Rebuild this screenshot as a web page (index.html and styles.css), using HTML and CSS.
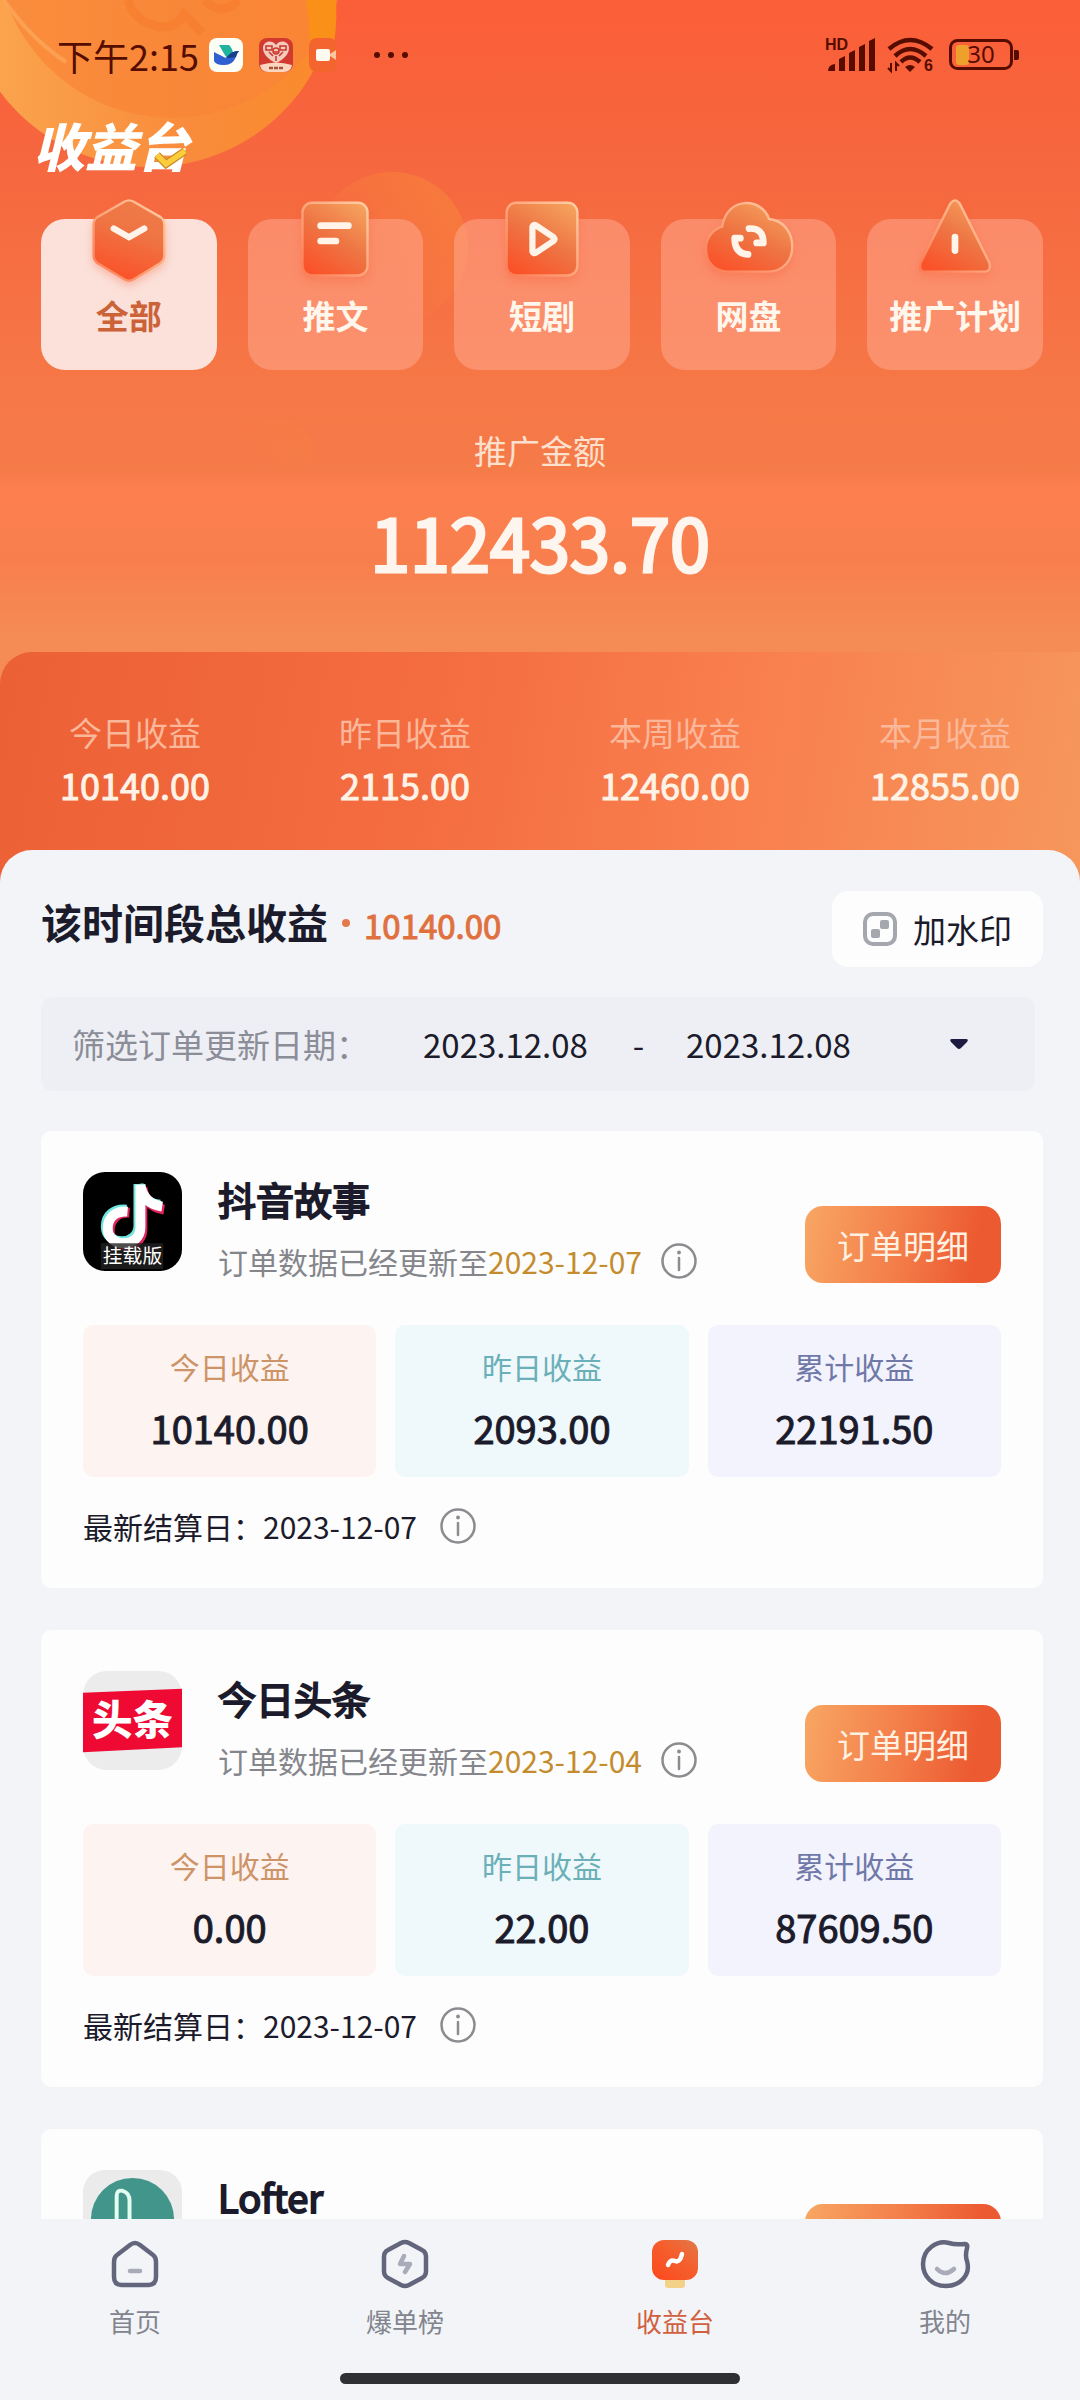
FILE: index.html
```html
<!DOCTYPE html>
<html lang="zh-CN">
<head>
    <meta charset="UTF-8">
    <meta name="viewport" content="width=device-width, initial-scale=1.0">
    <title>收益台</title>
    <link rel="stylesheet" href="styles.css">
</head>
<body>

    <!-- Shared gradients and symbols -->
    <svg class="defs" aria-hidden="true">
        <defs>
            <linearGradient id="tile" x1="0.2" y1="1" x2="0.8" y2="0">
                <stop offset="0" stop-color="#fb5128"/>
                <stop offset="0.5" stop-color="#ee7443"/>
                <stop offset="1" stop-color="#f5a05c"/>
            </linearGradient>
            <linearGradient id="hex" x1="0.4" y1="1" x2="0.7" y2="0">
                <stop offset="0" stop-color="#fb5128"/>
                <stop offset="0.6" stop-color="#ef7444"/>
                <stop offset="1" stop-color="#ee7c48"/>
            </linearGradient>
            <linearGradient id="screen" x1="0" y1="1" x2="1" y2="0">
                <stop offset="0" stop-color="#fd481c"/>
                <stop offset="0.6" stop-color="#f4602f"/>
                <stop offset="1" stop-color="#e07a48"/>
            </linearGradient>
            <linearGradient id="edge" x1="0" y1="1" x2="1" y2="0">
                <stop offset="0" stop-color="#fb7c54"/>
                <stop offset="1" stop-color="#ffcfa6"/>
            </linearGradient>
            <linearGradient id="coin" x1="0" y1="0" x2="1" y2="0">
                <stop offset="0" stop-color="#fba850"/>
                <stop offset="0.6" stop-color="#f98c3c"/>
                <stop offset="1" stop-color="#fa8a2a"/>
            </linearGradient>
            <linearGradient id="small-coin" x1="0" y1="1" x2="1" y2="0">
                <stop offset="0.3" stop-color="#f98a3c" stop-opacity="0"/>
                <stop offset="1" stop-color="#f98a38" stop-opacity="0.6"/>
            </linearGradient>
        </defs>
        <symbol id="info" viewBox="0 0 38 38">
            <circle cx="19" cy="19" r="16.5" fill="none" stroke="currentColor" stroke-width="2.5"/>
            <circle cx="19" cy="10.5" r="1.9" fill="currentColor"/>
            <path d="M19 16v12" stroke="currentColor" stroke-width="2.5" stroke-linecap="round"/>
        </symbol>
    </svg>

    <div class="app">
        <header class="hero">
            <svg class="coins" viewBox="0 0 480 520" aria-hidden="true">
                <circle cx="150" cy="-20" r="187" fill="url(#coin)"/>
                <circle cx="172" cy="-58" r="176" fill="#fa8437" opacity="0.7"/>
                <path d="M4 0Q30 38 66 62" fill="none" stroke="#fca85a" stroke-width="4" opacity="0.7"/>
                <path d="M128 0Q134 22 160 27Q176 28 184 14L202 33M205 0Q222 18 238 0" fill="none" stroke="#f47422" stroke-width="9" opacity="0.35"/>
                <path d="M306 0h30q2 34-6 60l-22 0q4-30-2-60z" fill="#fa9018"/>
                <circle cx="392" cy="248" r="76" fill="url(#small-coin)"/>
                <ellipse cx="272" cy="448" rx="40" ry="30" fill="url(#small-coin)" opacity="0.3"/>
            </svg>

            <div class="status-bar">
                <span class="time">下午2:15</span>
                <svg class="app-icon" viewBox="0 0 34 34" aria-hidden="true">
                    <rect width="34" height="34" rx="8" fill="#fdfef6"/>
                    <path d="M10 7h10q4 4 4 9l-7 3z" fill="#20b49c"/>
                    <path d="M5 14q8 4 12 6 5-7 13-7-2 2-3 6-4 9-13 8-7 0-9-4z" fill="#2f5fd0"/>
                    <path d="M17 20q6-8 13-7-2 2-3 6-5 1-10 1z" fill="#174089"/>
                </svg>
                <svg class="app-icon" viewBox="0 0 34 34" aria-hidden="true">
                    <rect width="34" height="34" rx="8" fill="#d23a30"/>
                    <path d="M17 25C8 21 4 15 4 10c0-7 9-9 13-3 4-6 13-4 13 3 0 5-4 11-13 15z" fill="#f6c9bd"/>
                    <path d="M7 8h6v4H7zM21 8h6v4h-6zM14 14h6M10 14l4 4M24 14l-4 4M17 18v5" fill="none" stroke="#c4352c" stroke-width="1.5"/>
                    <circle cx="17" cy="13" r="3" fill="none" stroke="#d23a30" stroke-width="1.5"/>
                    <path d="M1 27q16-5 32 0-1 7-8 7H9q-7 0-8-7z" fill="#fbd5bd"/>
                    <path d="M10 30h14" stroke="#a5533f" stroke-width="2.5" stroke-dasharray="4 1"/>
                </svg>
                <svg class="app-icon" viewBox="0 0 34 34" aria-hidden="true">
                    <rect width="28" height="34" rx="8" fill="#f4642f"/>
                    <rect x="7" y="11" width="14" height="12" rx="2" fill="#fffaf0"/>
                    <path d="M21 16l6-4v10l-6-4z" fill="#fcc7a0"/>
                </svg>
                <svg class="dots" viewBox="0 0 36 8" aria-hidden="true">
                    <circle cx="4" cy="4" r="3"/><circle cx="18" cy="4" r="3"/><circle cx="32" cy="4" r="3"/>
                </svg>
                <svg class="signal" viewBox="0 0 52 34" aria-hidden="true">
                    <text x="0" y="12" class="hd">HD</text>
                    <path d="M3 33q0-6 7-7v7zM14 21l6-3v15h-6zM24 15l6-3v21h-6zM34 9l6-3v27h-6zM44 3l6-3v33h-6z"/>
                </svg>
                <svg class="wifi" viewBox="0 0 48 36" aria-hidden="true">
                    <g fill="none" stroke="#560d00" stroke-width="4.5">
                        <path d="M2 12Q23-6 45 12"/>
                        <path d="M8 19Q23 5 39 19"/>
                        <path d="M14 25Q23 16 33 25"/>
                    </g>
                    <path d="M18 30q5-4 10 0l-5 5z"/>
                    <path d="M4 26v8l-3-3M9 34v-8l3 3" fill="none" stroke="#560d00" stroke-width="2"/>
                    <text x="37" y="34" class="hd">6</text>
                </svg>
                <svg class="battery" viewBox="0 0 70 32" aria-hidden="true">
                    <rect x="7" y="6" width="13" height="20" rx="3" fill="#eea02c"/>
                    <rect x="1.5" y="1.5" width="61" height="28" rx="7" fill="none" stroke="#560d00" stroke-width="3"/>
                    <path d="M65 11h3q2 0 2 2v6q0 2-2 2h-3z"/>
                    <text x="32" y="24" text-anchor="middle" class="level">30</text>
                </svg>
            </div>

            <h1 class="page-title">收益台
                <svg class="tick" viewBox="0 0 36 24" aria-hidden="true">
                    <path d="M4 8l9 9L32 4" fill="none" stroke="#c98b2c" stroke-width="8"/>
                    <path d="M4 8l9 9L32 4" fill="none" stroke="#fbcd3a" stroke-width="5.5"/>
                </svg>
            </h1>

            <nav class="tabs">
                <button class="tab active" type="button">
                    <svg viewBox="0 0 92 92" aria-hidden="true">
                        <path d="M41 5q5-3 10 0l28 16q4 3 4 8v32q0 5-4 8L51 86q-5 3-10 0L13 69q-4-3-4-8V29q0-5 4-8z" fill="url(#hex)" stroke="url(#edge)" stroke-width="2.5"/>
                        <path d="M30 33l16 9 16-9" fill="none" stroke="#fff4ea" stroke-width="6.5" stroke-linecap="round"/>
                    </svg>
                    <span>全部</span>
                </button>
                <button class="tab" type="button">
                    <svg viewBox="0 0 92 92" aria-hidden="true">
                        <rect x="12" y="6" width="68" height="76" rx="10" fill="url(#tile)" stroke="url(#edge)" stroke-width="2.5"/>
                        <path d="M31 30h29M31 46h16" stroke="#fff4ea" stroke-width="7" stroke-linecap="round"/>
                    </svg>
                    <span>推文</span>
                </button>
                <button class="tab" type="button">
                    <svg viewBox="0 0 92 92" aria-hidden="true">
                        <rect x="9" y="6" width="74" height="76" rx="10" fill="url(#tile)" stroke="url(#edge)" stroke-width="2.5"/>
                        <path d="M36 31v26q1 3 4 1l18-12q2-2 0-4L40 30q-3-2-4 1z" fill="none" stroke="#fff4ea" stroke-width="6.5" stroke-linejoin="round"/>
                    </svg>
                    <span>短剧</span>
                </button>
                <button class="tab" type="button">
                    <svg viewBox="0 0 92 92" aria-hidden="true">
                        <path d="M24 78h42c34 0 33-52 1-55C59 0 23-1 18 31 11 33 1 40 1 54c0 14 9 24 23 24z" fill="url(#tile)" stroke="url(#edge)" stroke-width="2.5"/>
                        <path d="M46 33q15-1 15 15l-7 0M45 60q-14-1-14-17h6" fill="none" stroke="#fff4ea" stroke-width="7" stroke-linecap="round" stroke-linejoin="round"/>
                    </svg>
                    <span>网盘</span>
                </button>
                <button class="tab" type="button">
                    <svg viewBox="0 0 92 92" aria-hidden="true">
                        <path d="M41 7q5-7 10 0l31 62q2 9-5 9H15q-7 0-5-9z" fill="url(#tile)" stroke="url(#edge)" stroke-width="2.5"/>
                        <path d="M46 42v14" stroke="#fff4ea" stroke-width="7" stroke-linecap="round"/>
                    </svg>
                    <span>推广计划</span>
                </button>
            </nav>

            <section class="total">
                <h2>推广金额</h2>
                <p>112433.70</p>
            </section>

            <dl class="stats">
                <div><dt>今日收益</dt><dd>10140.00</dd></div>
                <div><dt>昨日收益</dt><dd>2115.00</dd></div>
                <div><dt>本周收益</dt><dd>12460.00</dd></div>
                <div><dt>本月收益</dt><dd>12855.00</dd></div>
            </dl>
        </header>

        <main class="sheet">
            <div class="summary">
                <div class="range">
                    <h2>该时间段总收益</h2>
                    <span class="bullet"></span>
                    <span class="sum">10140.00</span>
                </div>
                <button class="watermark" type="button">
                    <svg viewBox="0 0 34 34" aria-hidden="true">
                        <rect x="2" y="2" width="30" height="30" rx="8" fill="none" stroke="#a5a7ae" stroke-width="4"/>
                        <rect x="17" y="8" width="9" height="9" rx="2" fill="#a5a7ae"/>
                        <rect x="8" y="17" width="9" height="9" rx="2" fill="#a5a7ae"/>
                    </svg>
                    加水印
                </button>
            </div>

            <div class="filter">
                <label for="date-from">筛选订单更新日期：</label>
                <input id="date-from" type="text" value="2023.12.08">
                <span class="dash">-</span>
                <input id="date-to" type="text" value="2023.12.08" aria-label="结束日期">
                <button class="caret" type="button" aria-label="展开">
                    <svg viewBox="0 0 20 12" aria-hidden="true"><path d="M3 1h14q3 0 1 3l-6 6q-2 2-4 0L2 4Q0 1 3 1z" fill="#1d1b3f"/></svg>
                </button>
            </div>

            <article class="card">
                <div class="card-head">
                    <svg class="logo" viewBox="0 0 100 100" aria-hidden="true">
                        <rect width="100" height="100" rx="22" fill="#000"/>
                        <g fill="none" stroke-width="10">
                            <path d="M60 16v42c0 21-33 21-33 1 0-11 8-19 20-18M60 16c2 13 9 20 22 22" stroke="#e0245e"/>
                            <path d="M56 12v42c0 21-33 21-33 1 0-11 8-18 21-17M56 12c2 13 9 20 22 21" stroke="#6fe6df"/>
                            <path d="M58 13v43c0 21-33 21-33 1 0-11 8-18 20-17M58 13c2 13 9 20 22 22" stroke="#fff"/>
                        </g>
                        <path d="M18 72h63v26H18z" fill="#222" opacity="0.8"/>
                        <text x="50" y="92" text-anchor="middle" class="logo-tag">挂载版</text>
                    </svg>
                    <div class="app-info">
                        <h3>抖音故事</h3>
                        <p>订单数据已经更新至<time>2023-12-07</time>
                            <button class="info" type="button" aria-label="说明"><svg><use href="#info"/></svg></button>
                        </p>
                    </div>
                    <button class="detail" type="button">订单明细</button>
                </div>
                <dl class="income">
                    <div class="today"><dt>今日收益</dt><dd>10140.00</dd></div>
                    <div class="yesterday"><dt>昨日收益</dt><dd>2093.00</dd></div>
                    <div class="all"><dt>累计收益</dt><dd>22191.50</dd></div>
                </dl>
                <p class="settle">最新结算日：2023-12-07
                    <button class="info" type="button" aria-label="说明"><svg><use href="#info"/></svg></button>
                </p>
            </article>

            <article class="card">
                <div class="card-head">
                    <svg class="logo" viewBox="0 0 100 100" aria-hidden="true">
                        <rect width="100" height="100" rx="24" fill="#ececed"/>
                        <path d="M0 22l100-4v59L0 82z" fill="#ee0a33"/>
                        <text x="50" y="65" text-anchor="middle" class="logo-name">头条</text>
                    </svg>
                    <div class="app-info">
                        <h3>今日头条</h3>
                        <p>订单数据已经更新至<time>2023-12-04</time>
                            <button class="info" type="button" aria-label="说明"><svg><use href="#info"/></svg></button>
                        </p>
                    </div>
                    <button class="detail" type="button">订单明细</button>
                </div>
                <dl class="income">
                    <div class="today"><dt>今日收益</dt><dd>0.00</dd></div>
                    <div class="yesterday"><dt>昨日收益</dt><dd>22.00</dd></div>
                    <div class="all"><dt>累计收益</dt><dd>87609.50</dd></div>
                </dl>
                <p class="settle">最新结算日：2023-12-07
                    <button class="info" type="button" aria-label="说明"><svg><use href="#info"/></svg></button>
                </p>
            </article>

            <article class="card">
                <div class="card-head">
                    <svg class="logo" viewBox="0 0 100 100" aria-hidden="true">
                        <rect width="100" height="100" rx="22" fill="#ebebec"/>
                        <circle cx="50" cy="50" r="42" fill="#42958a"/>
                        <path d="M34 80V26q0-6 6-5 7 2 7 10v49" fill="none" stroke="#e4fff0" stroke-width="4"/>
                    </svg>
                    <div class="app-info">
                        <h3>Lofter</h3>
                    </div>
                    <button class="detail" type="button" aria-label="订单明细"></button>
                </div>
            </article>
        </main>

        <footer class="tab-bar">
            <nav>
                <a href="#home">
                    <svg viewBox="0 0 50 50" aria-hidden="true">
                        <path d="M20 6q5-4 10 0l13 10q3 2 3 7v15q0 8-8 8H12q-8 0-8-8V23q0-5 3-7z" fill="none" stroke="#62657b" stroke-width="4.5"/>
                        <path d="M20 32h10" stroke="#a9abb8" stroke-width="4.5" stroke-linecap="round"/>
                    </svg>
                    首页
                </a>
                <a href="#hot">
                    <svg viewBox="0 0 50 50" aria-hidden="true">
                        <path d="M21 4q4-2 8 0l13 7q4 2 4 7v14q0 5-4 7l-13 7q-4 2-8 0L8 39q-4-2-4-7V18q0-5 4-7z" fill="none" stroke="#62657b" stroke-width="4.5"/>
                        <path d="M24 17l-4 8h10l-5 8" fill="none" stroke="#a9abb8" stroke-width="4.5" stroke-linecap="round" stroke-linejoin="round"/>
                    </svg>
                    爆单榜
                </a>
                <a href="#income" class="active">
                    <svg viewBox="0 0 50 50" aria-hidden="true">
                        <rect x="15" y="38" width="20" height="11" rx="3" fill="#f3d188"/>
                        <rect x="2" y="1" width="46" height="40" rx="12" fill="url(#screen)"/>
                        <path d="M18 26q2-6 7-4t7-7" fill="none" stroke="#fff" stroke-width="4.5" stroke-linecap="round"/>
                    </svg>
                    收益台
                </a>
                <a href="#me">
                    <svg viewBox="0 0 50 50" aria-hidden="true">
                        <path d="M29 4q6 2 16 1 3 0 2 4-2 8 0 13C51 36 40 47 26 47 12 47 3 37 3 25 3 10 17 1 29 4z" fill="none" stroke="#62657b" stroke-width="4.5" stroke-linejoin="round"/>
                        <path d="M17 30q8 8 17 0" fill="none" stroke="#a9abb8" stroke-width="4.5" stroke-linecap="round"/>
                    </svg>
                    我的
                </a>
            </nav>
            <div class="home-bar"></div>
        </footer>
    </div>

</body>
</html>
```
FILE: styles.css
```css
* {
    box-sizing: border-box;
    margin: 0;
    padding: 0;
}

body {
    font-family: "Noto Sans CJK SC", "Noto Sans", sans-serif;
    font-size: 33px;
    line-height: 40px;
    background-color: #f2f4f8;
    color: #1b1b2b;
}

button,
input {
    font: inherit;
    color: inherit;
    background: none;
    border: none;
}

button {
    cursor: pointer;
}

svg {
    display: block;
    flex: none;
    overflow: visible;
}

.defs {
    position: absolute;
    width: 0;
    height: 0;
}

.app {
    display: flex;
    flex-direction: column;
    height: 100vh;
}

/* Orange header */
.hero {
    position: relative;
    flex: none;
    background: linear-gradient(#fb5e38 0, #f6673f 160px, #f67646 370px, #f57b49 470px, #fd7f50 490px, #f87f4d 560px, #f58c55 640px);
    overflow: hidden;
}

.coins {
    position: absolute;
    top: 0;
    left: 0;
    width: 480px;
    height: 520px;
}

.status-bar {
    position: relative;
    display: flex;
    align-items: center;
    height: 110px;
    padding: 0 61px 0 57px;
    fill: #560d00;
}

.time {
    font-size: 36px;
    color: #560d00;
    margin-right: 10px;
}

.app-icon {
    width: 34px;
    height: 34px;
    margin-right: 16px;
}

.dots {
    width: 36px;
    height: 8px;
    margin-left: 14px;
    margin-right: auto;
}

.signal {
    width: 52px;
    height: 34px;
}

.hd {
    font-family: "Liberation Sans", sans-serif;
    font-size: 16px;
    font-weight: bold;
}

.wifi {
    width: 48px;
    height: 36px;
    margin: 0 14px 0 10px;
}

.battery {
    width: 70px;
    height: 32px;
}

.level {
    font-family: "Noto Sans", sans-serif;
    font-size: 24px;
}

.page-title {
    position: relative;
    width: max-content;
    margin-left: 33px;
    font-size: 52px;
    line-height: 70px;
    font-weight: 900;
    font-style: italic;
    color: #fff;
}

.tick {
    position: absolute;
    right: 0;
    bottom: 9px;
    width: 36px;
    height: 24px;
}

.tabs {
    position: relative;
    display: grid;
    grid-template-columns: repeat(5, 1fr);
    gap: 31px;
    margin-top: 39px;
    padding: 0 37px 0 41px;
}

.tab {
    display: flex;
    flex-direction: column;
    align-items: center;
    padding-bottom: 35px;
    border-radius: 24px;
    background-color: rgba(255, 172, 148, 0.5);
    color: #fff6ec;
    font-weight: bold;
    white-space: nowrap;
}

.tab svg {
    width: 92px;
    height: 88px;
    margin-top: -22px;
    margin-bottom: 10px;
    filter: drop-shadow(0 4px 4px rgba(250, 90, 50, 0.3));
}

.tab.active {
    background-color: #fbe1da;
    color: #cc6238;
}

.total {
    position: relative;
    padding: 60px 0 65px;
    text-align: center;
    color: #fef6ee;
}

.total h2 {
    font-size: 33px;
    font-weight: normal;
    color: #fde0ce;
}

.total p {
    margin-top: 25px;
    font-size: 72px;
    line-height: 92px;
    -webkit-text-stroke: 3px currentColor;
}

.stats {
    position: relative;
    display: grid;
    grid-template-columns: repeat(4, 1fr);
    padding: 60px 0 84px;
    border-radius: 32px 0 0 0;
    background: linear-gradient(100deg, #ec6035, #f46d41 40%, #f97f4e 68%, #f6975c);
    text-align: center;
}

.stats dt {
    color: #fbb799;
}

.stats dd {
    margin-top: 12px;
    font-size: 36px;
    color: #fef3e6;
    -webkit-text-stroke: 1px currentColor;
}

/* Content sheet */
.sheet {
    position: relative;
    flex: 1;
    min-height: 0;
    margin-top: -38px;
    padding: 41px 37px 0 41px;
    border-radius: 32px 32px 0 0;
    background-color: #f2f4f8;
    overflow: hidden;
}

.summary {
    display: flex;
    align-items: flex-start;
    justify-content: space-between;
}

.range {
    display: flex;
    align-items: baseline;
    padding-top: 10px;
}

.range h2 {
    font-size: 41px;
    font-weight: bold;
}

.bullet {
    align-self: center;
    width: 8px;
    height: 8px;
    margin: 0 14px 0 14px;
    border-radius: 50%;
    background-color: #e47a4c;
}

.sum {
    font-size: 33px;
    color: #e0713f;
    -webkit-text-stroke: 1px currentColor;
}

.watermark {
    display: flex;
    align-items: center;
    gap: 16px;
    padding: 18px 31px;
    border-radius: 16px;
    background-color: #fdfdfe;
}

.watermark svg {
    width: 34px;
    height: 34px;
}

.filter {
    display: flex;
    align-items: center;
    height: 94px;
    margin: 30px 8px 0 0;
    padding: 0 62px 0 31px;
    border-radius: 12px;
    background-color: #eeeff4;
}

.filter label {
    margin-right: 54px;
    color: #8b8d98;
}

.filter input {
    width: 168px;
}

.dash {
    width: 95px;
    text-align: center;
}

.caret {
    margin-left: auto;
    padding: 4px;
}

.caret svg {
    width: 20px;
    height: 12px;
}

.card {
    margin-top: 42px;
    padding: 41px 42px 42px;
    border-radius: 10px;
    background-color: #fdfdfd;
}

.filter + .card {
    margin-top: 40px;
}

.card-head {
    display: flex;
    align-items: flex-start;
}

.logo {
    width: 99px;
    height: 99px;
}

.logo-tag {
    font-size: 20px;
    fill: #fff;
}

.logo-name {
    font-size: 41px;
    font-weight: 900;
    fill: #fff;
}

.app-info {
    flex: 1;
    margin-left: 36px;
    padding-top: 7px;
}

.app-info h3 {
    font-size: 38px;
    font-weight: normal;
    -webkit-text-stroke: 2px currentColor;
}

.app-info p {
    display: flex;
    align-items: center;
    margin-top: 22px;
    font-size: 30px;
    color: #84868c;
}

.app-info time {
    color: #c58c2e;
}

.info {
    margin-left: 18px;
    color: #8c8c90;
}

.info svg {
    width: 38px;
    height: 38px;
}

.detail {
    min-width: 196px;
    min-height: 77px;
    margin-top: 34px;
    border-radius: 18px;
    background: linear-gradient(100deg, #f8a663, #f37c48 50%, #ec5a31 85%);
    color: #fff1e2;
}

.income {
    display: grid;
    grid-template-columns: repeat(3, 1fr);
    gap: 19px;
    margin-top: 42px;
    text-align: center;
}

.income div {
    padding: 21px 0 25px;
    border-radius: 10px;
}

.income dt {
    font-size: 30px;
}

.income dd {
    margin-top: 18px;
    font-size: 38px;
    line-height: 48px;
    -webkit-text-stroke: 1px currentColor;
}

.today {
    background-color: #fdf3f1;
}

.today dt {
    color: #cd9468;
}

.yesterday {
    background-color: #eff8fb;
}

.yesterday dt {
    color: #6bb0b8;
}

.all {
    background-color: #f2f3fc;
}

.all dt {
    color: #7078a8;
}

.settle {
    display: flex;
    align-items: center;
    margin-top: 29px;
    font-size: 30px;
}

.settle .info {
    margin-left: 22px;
}

/* Bottom navigation */
.tab-bar {
    position: relative;
    flex: none;
    padding: 20px 0 16px;
    background-color: #f2f4f8;
}

.tab-bar nav {
    display: grid;
    grid-template-columns: repeat(4, 1fr);
}

.tab-bar a {
    display: flex;
    flex-direction: column;
    align-items: center;
    gap: 12px;
    font-size: 26px;
    color: #82848e;
    text-decoration: none;
}

.tab-bar a.active {
    color: #d0603f;
}

.tab-bar svg {
    width: 50px;
    height: 50px;
}

.home-bar {
    width: 37%;
    height: 11px;
    margin: 32px auto 0;
    border-radius: 6px;
    background-color: #2e3033;
}
```
